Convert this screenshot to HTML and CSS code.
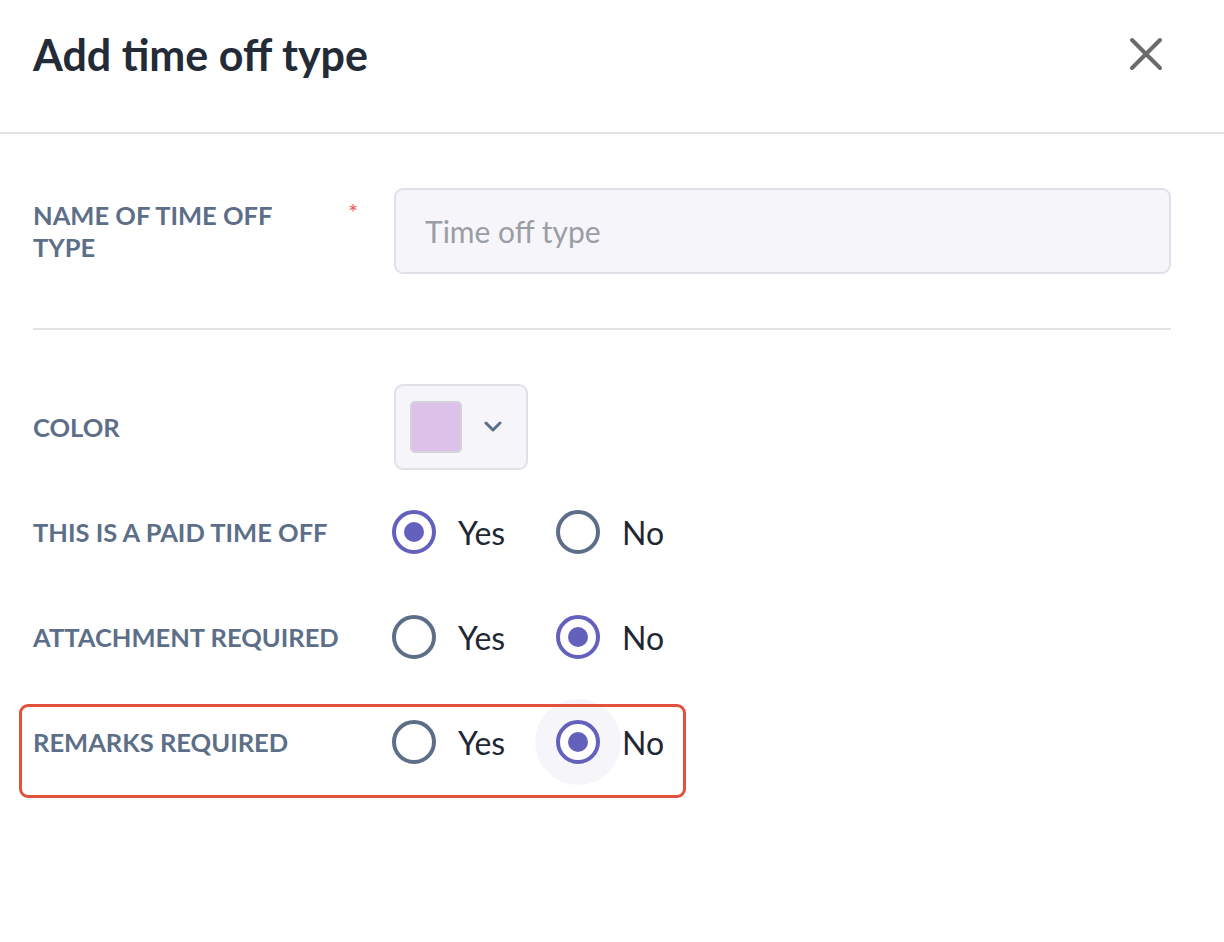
FILE: index.html
```html
<!DOCTYPE html>
<html lang="en">
<head>
<meta charset="utf-8">
<title>Add time off type</title>
<link rel="stylesheet" href="styles.css">
</head>
<body>
<div class="modal">
  <header class="modal-header">
    <h1 class="modal-title">Add time off type</h1>
    <button class="close-btn" aria-label="Close">
      <svg width="34" height="34" viewBox="0 0 34 34"><path d="M3 3 L31 31 M31 3 L3 31" stroke="#6b6b6b" stroke-width="4" stroke-linecap="round" fill="none"/></svg>
    </button>
  </header>
  <div class="modal-body">
    <div class="row row-name">
      <label class="label">NAME OF TIME OFF TYPE<span class="req">*</span></label>
      <input class="text-input" type="text" placeholder="Time off type">
    </div>
    <hr class="divider">
    <div class="row">
      <span class="label">COLOR</span>
      <button class="color-btn">
        <span class="swatch"></span>
        <svg class="chev" width="20" height="12" viewBox="0 0 20 12"><path d="M3 2 L10 9 L17 2" stroke="#5d6f88" stroke-width="3" fill="none" stroke-linecap="round" stroke-linejoin="round"/></svg>
      </button>
    </div>
    <div class="row">
      <span class="label">THIS IS A PAID TIME OFF</span>
      <div class="radios">
        <div class="option"><span class="radio checked"></span><span class="opt-text">Yes</span></div>
        <div class="option"><span class="radio"></span><span class="opt-text">No</span></div>
      </div>
    </div>
    <div class="row">
      <span class="label">ATTACHMENT REQUIRED</span>
      <div class="radios">
        <div class="option"><span class="radio"></span><span class="opt-text">Yes</span></div>
        <div class="option"><span class="radio checked"></span><span class="opt-text">No</span></div>
      </div>
    </div>
    <div class="row highlight">
      <span class="label">REMARKS REQUIRED</span>
      <div class="radios">
        <div class="option"><span class="radio"></span><span class="opt-text">Yes</span></div>
        <div class="option"><span class="radio checked focused"></span><span class="opt-text">No</span></div>
      </div>
    </div>
  </div>
</div>
</body>
</html>
```
FILE: styles.css
```css
* { box-sizing: border-box; }
html, body { margin: 0; padding: 0; background: #ffffff; }
body { font-family: Lato, "Open Sans", sans-serif; color: #1f2733; }

.modal { width: 1224px; height: 942px; background: #fff; }

.modal-header {
  height: 134px;
  border-bottom: 2px solid #e2e3e6;
  display: flex;
  align-items: center;
  justify-content: space-between;
  padding: 0 61px 24px 33px;
}
.modal-title {
  margin: 0;
  font-size: 43px;
  font-weight: 700;
  color: #222b36;
}
.close-btn {
  border: 0;
  background: none;
  padding: 0;
  width: 34px;
  height: 34px;
  cursor: pointer;
  display: block;
}
.close-btn svg { display: block; }

.modal-body { padding: 54px 53px 0 33px; }

.row {
  display: flex;
  align-items: center;
  min-height: 86px;
  margin-bottom: 19px;
  position: relative;
}
.row-name { margin-bottom: 0; }

.label {
  width: 361px;
  flex: none;
  font-size: 25.5px;
  font-weight: 700;
  color: #5d6f88;
  line-height: 32px;
  position: relative;
  padding-right: 20px;
}
.row-name .label { padding-right: 80px; }
.req {
  position: absolute;
  left: 315px;
  top: -3px;
  color: #ef5b5b;
  font-size: 24px;
  font-weight: 400;
}

.text-input {
  flex: 1;
  height: 86px;
  border: 2px solid #dfe0e8;
  border-radius: 9px;
  background: #f5f5fa;
  padding: 0 29px;
  font-family: Lato, sans-serif;
  font-size: 30px;
  color: #222b36;
  outline: none;
}
.text-input::placeholder { color: #9b9da4; }

.divider {
  border: 0;
  border-top: 2px solid #e2e3e6;
  margin: 54px 0 54px 0;
}

.color-btn {
  width: 134px;
  height: 86px;
  border: 2px solid #dfe0e8;
  border-radius: 9px;
  background: #f5f5fa;
  display: flex;
  align-items: center;
  padding: 0 0 0 14px;
  gap: 21px;
  cursor: pointer;
}
.swatch {
  width: 52px;
  height: 52px;
  background: #dec1e8;
  border: 2px solid #d3d3dc;
  border-radius: 5px;
  display: block;
}
.chev { display: block; }

.radios { display: flex; align-items: center; margin-left: -2px; }
.option { display: flex; align-items: center; width: 164px; }
.radio {
  width: 44px;
  height: 44px;
  border-radius: 50%;
  border: 4px solid #5d6f88;
  background: #fff;
  display: flex;
  align-items: center;
  justify-content: center;
  flex: none;
}
.radio.checked { border-color: #6461bd; }
.radio.checked::after {
  content: "";
  width: 20px;
  height: 20px;
  border-radius: 50%;
  background: #6461bd;
}
.radio.focused { box-shadow: 0 0 0 21px #f6f6fa; }
.opt-text {
  margin-left: 22px;
  font-size: 32px;
  color: #1f2733;
  position: relative;
}

.highlight::after {
  content: "";
  position: absolute;
  left: -14px;
  top: 5px;
  width: 661px;
  height: 88px;
  border: 3px solid #e2503e;
  border-radius: 9px;
  pointer-events: none;
}
```
